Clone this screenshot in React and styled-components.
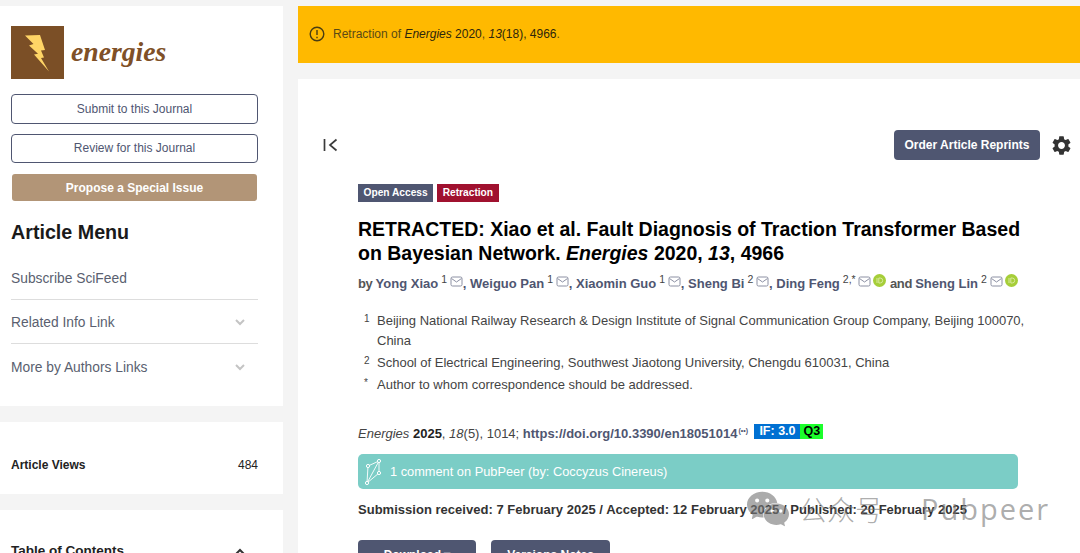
import React from "react";
import styled, { createGlobalStyle } from "styled-components";
import { MdSettings } from "react-icons/md";
import { SiWechat } from "react-icons/si";

const GlobalStyle = createGlobalStyle`
  html, body {
    margin: 0;
    padding: 0;
    height: 553px;
    overflow: hidden;
    background: #f4f4f4;
    font-family: "Liberation Sans", Arial, sans-serif;
    color: #222222;
  }
`;

const Page = styled.div`
  position: relative;
  display: flex;
  gap: 15px;
  height: 547px;
  padding-top: 6px;
  overflow: hidden;
`;

const Sidebar = styled.aside`
  flex: 0 0 283px;
  display: flex;
  flex-direction: column;
  gap: 16px;
`;

const SideCard = styled.section`
  flex: 0 0 auto;
  background: #ffffff;
  box-sizing: border-box;
  height: ${(p) => p.$height}px;
  padding: ${(p) => p.$padding};
`;

const LogoRow = styled.div`
  display: flex;
  align-items: center;
  gap: 7px;
  height: 53px;
  margin-bottom: 15px;
`;

const LogoWord = styled.span`
  font-family: "Liberation Serif", serif;
  font-style: italic;
  font-weight: 700;
  font-size: 27.7px;
  color: #7f5027;
  position: relative;
  top: -1px;
`;

const OutlineButton = styled.div`
  box-sizing: border-box;
  height: 29.5px;
  margin-bottom: 10px;
  border: 1px solid #4f5671;
  border-radius: 4px;
  display: flex;
  align-items: center;
  justify-content: center;
  font-size: 12px;
  color: #4f5671;
`;

const ProposeButton = styled.div`
  height: 27px;
  margin: 11px 1px 0;
  border-radius: 3px;
  background: #b29577;
  display: flex;
  align-items: center;
  justify-content: center;
  font-size: 12px;
  font-weight: 700;
  color: #ffffff;
`;

const MenuTitle = styled.h2`
  margin: 19px 0 12px;
  font-size: 19.7px;
  line-height: 24px;
  font-weight: 700;
  color: #1a1a1a;
`;

const MenuRow = styled.div`
  box-sizing: border-box;
  height: 44px;
  display: flex;
  align-items: center;
  justify-content: space-between;
  padding: 2px 13px 0 0;
  font-size: 13.8px;
  color: #5a5f70;
  border-bottom: ${(p) => (p.$last ? "none" : "1px solid #dddddd")};
`;

const StatRow = styled.div`
  display: flex;
  justify-content: space-between;
  align-items: center;
  font-size: 12px;
  line-height: 14px;
  color: #222222;
`;

const StatLabel = styled.strong`
  font-weight: 700;
`;

const TocRow = styled.div`
  display: flex;
  justify-content: space-between;
  align-items: center;
  padding-right: 13px;
  font-size: 13.5px;
  font-weight: 700;
  line-height: 16px;
  color: #222222;
`;

const Main = styled.main`
  flex: 1;
  display: flex;
  flex-direction: column;
  gap: 16px;
  min-width: 0;
`;

const Banner = styled.div`
  box-sizing: border-box;
  flex: 0 0 57px;
  background: #ffb900;
  display: flex;
  align-items: center;
  gap: 8px;
  padding: 0 0 2px 11px;
  font-size: 12px;
  color: #5a4a16;
`;

const BannerDark = styled.span`
  color: #2e260c;
  font-style: ${(p) => (p.$italic ? "italic" : "normal")};
`;

const ArticleCard = styled.article`
  flex: 1;
  background: #ffffff;
  padding-top: 51px;
  min-height: 0;
`;

const TopBar = styled.div`
  display: flex;
  align-items: center;
  justify-content: space-between;
  height: 30px;
  padding: 0 7px 0 25px;
`;

const TopActions = styled.div`
  display: flex;
  align-items: center;
  gap: 10px;
`;

const ReprintButton = styled.div`
  box-sizing: border-box;
  width: 146px;
  height: 30px;
  border-radius: 4px;
  background: #4f5671;
  color: #ffffff;
  font-size: 12px;
  font-weight: 700;
  display: flex;
  align-items: center;
  justify-content: center;
`;

const Content = styled.div`
  padding: 24px 50px 0 60px;
`;

const BadgeRow = styled.div`
  display: flex;
  gap: 4px;
  height: 18px;
`;

const Badge = styled.span`
  background: ${(p) => p.$bg};
  color: #ffffff;
  font-size: 10.2px;
  font-weight: 700;
  line-height: 18px;
  padding: 0 5.5px;
`;

const Title = styled.h1`
  margin: 15px 0 0;
  font-size: 19.5px;
  line-height: 24px;
  font-weight: 700;
  color: #000000;
`;

const Authors = styled.div`
  margin-top: 9px;
  font-size: 13px;
  line-height: 18px;
  font-weight: 700;
  color: #4f5671;
  white-space: nowrap;
`;

const Plain = styled.span`
  color: #555555;
  letter-spacing: -0.4px;
`;

const Sup = styled.sup`
  font-size: 10.5px;
  font-weight: 400;
  line-height: 0;
  margin: 0 2.75px 0 3px;
  color: #444444;
`;

const AffilList = styled.div`
  margin-top: 18px;
  display: flex;
  flex-direction: column;
  gap: 2px;
`;

const AffilRow = styled.div`
  display: grid;
  grid-template-columns: 19px 1fr;
  font-size: 13px;
  line-height: 20px;
  color: #444444;
`;

const AffilMark = styled.span`
  font-size: 10px;
  line-height: 16px;
  padding-left: 6px;
`;

const Citation = styled.div`
  margin-top: 29px;
  display: flex;
  align-items: center;
  height: 18px;
  font-size: 13px;
  color: #444444;
  white-space: nowrap;
`;

const CiteBold = styled.b`
  color: #222222;
`;

const DoiLink = styled.b`
  color: #4f5671;
`;

const Tiny = styled.span`
  width: 14px;
  font-size: 7px;
  font-weight: 700;
  color: #4f5671;
  margin: -6px 2px 0 1px;
`;

const ImpactBadge = styled.span`
  background: #0070d2;
  color: #ffffff;
  font-size: 12.5px;
  font-weight: 700;
  line-height: 15px;
  width: 46px;
  text-align: center;
  margin-top: -3px;
`;

const QuartileBadge = styled.span`
  background: #1cff2c;
  color: #000000;
  font-size: 12.5px;
  font-weight: 700;
  line-height: 15px;
  width: 23px;
  text-align: center;
  margin-top: -3px;
`;

const PubPeerBar = styled.div`
  margin-top: 12px;
  box-sizing: border-box;
  width: 660px;
  height: 35px;
  border-radius: 5px;
  background: #7bcdc6;
  color: #ffffff;
  display: flex;
  align-items: center;
  gap: 5px;
  padding-left: 7px;
  font-size: 12.8px;
`;

const Dates = styled.div`
  margin-top: 12px;
  font-size: 13px;
  letter-spacing: 0.02px;
  line-height: 18px;
  font-weight: 700;
  color: #333333;
  white-space: nowrap;
`;

const ButtonRow = styled.div`
  margin-top: 21px;
  display: flex;
  gap: 15px;
`;

const ActionButton = styled.div`
  width: ${(p) => p.$width}px;
  height: 30px;
  border-radius: 4px;
  background: #4f5671;
  color: #ffffff;
  font-size: 12px;
  font-weight: 700;
  display: flex;
  align-items: center;
  justify-content: center;
`;

const Watermark = styled.div`
  position: absolute;
  left: 747px;
  top: 488px;
  display: flex;
  align-items: center;
  color: rgba(120, 120, 120, 0.62);
  pointer-events: none;
`;

const WatermarkCjk = styled.span`
  margin-left: 10px;
  font-family: "Noto Sans CJK SC", sans-serif;
  font-size: 28px;
  line-height: 34px;
  font-weight: 300;
`;

const WatermarkName = styled.span`
  margin-left: 38px;
  font-family: "Open Sans", sans-serif;
  font-size: 29px;
  line-height: 34px;
  letter-spacing: 2px;
  font-weight: 400;
`;

const Chevron = ({ up }) => (
  <svg width="10" height="7" viewBox="0 0 10 7" fill="none" stroke={up ? "#333" : "#c4c4c4"} strokeWidth="2">
    <path d={up ? "M1 6l4-4 4 4" : "M1 1l4 4 4-4"} />
  </svg>
);

const Mail = () => (
  <svg width="13" height="11" viewBox="0 0 13 11" fill="none" stroke="#8c90a3" strokeWidth="1" style={{ verticalAlign: 1 }}>
    <rect x="1" y="1" width="11" height="9" rx="1.5" />
    <path d="M1.5 2.5l5 3.5 5-3.5" />
  </svg>
);

const Orcid = () => (
  <svg width="13" height="13" viewBox="0 0 13 13" style={{ verticalAlign: 1, marginLeft: 2 }}>
    <circle cx="6.5" cy="6.5" r="6.5" fill="#a6ce39" />
    <path d="M4 4v5" stroke="#d9ea9f" strokeWidth="1" />
    <path d="M5.8 4h1.4a2.5 2.5 0 010 5H5.8z" fill="none" stroke="#d9ea9f" strokeWidth="1" />
  </svg>
);

const authors = [
  ["Yong Xiao", "1"],
  ["Weiguo Pan", "1"],
  ["Xiaomin Guo", "1"],
  ["Sheng Bi", "2"],
];

const affiliations = [
  ["1", "Beijing National Railway Research & Design Institute of Signal Communication Group Company, Beijing 100070, China"],
  ["2", "School of Electrical Engineering, Southwest Jiaotong University, Chengdu 610031, China"],
  ["*", "Author to whom correspondence should be addressed."],
];

export default function App() {
  return (
    <Page>
      <GlobalStyle />
      <Sidebar>
        <SideCard $height={400} $padding="20px 25px 0 11px">
          <LogoRow>
            <svg width="53" height="53" viewBox="0 0 53 53">
              <rect width="53" height="53" fill="#7b4f26" />
              <path d="M14 9.5L29 9l5 15-4 .5 3 7-3 .5 8 13.5-15-17 4-.7-9-8.3 4.5-1.5z" fill="#ffd566" />
            </svg>
            <LogoWord>energies</LogoWord>
          </LogoRow>
          <OutlineButton>Submit to this Journal</OutlineButton>
          <OutlineButton>Review for this Journal</OutlineButton>
          <ProposeButton>Propose a Special Issue</ProposeButton>
          <MenuTitle>Article Menu</MenuTitle>
          <MenuRow>Subscribe SciFeed</MenuRow>
          <MenuRow>
            Related Info Link
            <Chevron />
          </MenuRow>
          <MenuRow $last>
            More by Authors Links
            <Chevron />
          </MenuRow>
        </SideCard>
        <SideCard $height={72} $padding="36px 25px 0 11px">
          <StatRow>
            <StatLabel>Article Views</StatLabel>
            484
          </StatRow>
        </SideCard>
        <SideCard $height={60} $padding="33px 25px 0 11px">
          <TocRow>
            Table of Contents
            <Chevron up />
          </TocRow>
        </SideCard>
      </Sidebar>
      <Main>
        <Banner>
          <svg width="16" height="16" viewBox="0 0 16 16" fill="none" stroke="#4a3d12" strokeWidth="1.4">
            <circle cx="8" cy="8" r="6.8" />
            <path d="M8 4v5M8 10.8v1.4" />
          </svg>
          <span>
            Retraction of <BannerDark $italic>Energies</BannerDark> <BannerDark>2020</BannerDark>,{" "}
            <BannerDark $italic>13</BannerDark>
            <BannerDark>(18), 4966</BannerDark>.
          </span>
        </Banner>
        <ArticleCard>
          <TopBar>
            <svg width="15" height="14" viewBox="0 0 15 14" fill="none" stroke="#3b3b3b" strokeWidth="1.7">
              <path d="M1.5 1v12M13.5 1.5L7 7l6.5 5.5" />
            </svg>
            <TopActions>
              <ReprintButton>Order Article Reprints</ReprintButton>
              <MdSettings size={23} color="#333333" />
            </TopActions>
          </TopBar>
          <Content>
            <BadgeRow>
              <Badge $bg="#4f5671">Open Access</Badge>
              <Badge $bg="#a0112f">Retraction</Badge>
            </BadgeRow>
            <Title>
              RETRACTED: Xiao et al. Fault Diagnosis of Traction Transformer Based on Bayesian Network. <i>Energies</i>{" "}
              2020, <i>13</i>, 4966
            </Title>
            <Authors>
              <Plain>by </Plain>
              {authors.map(([name, mark]) => (
                <React.Fragment key={name}>
                  {name}
                  <Sup>{mark}</Sup>
                  <Mail />,{" "}
                </React.Fragment>
              ))}
              Ding Feng
              <Sup>2,*</Sup>
              <Mail />
              <Orcid /> <Plain>and </Plain>
              Sheng Lin
              <Sup>2</Sup>
              <Mail />
              <Orcid />
            </Authors>
            <AffilList>
              {affiliations.map(([mark, text]) => (
                <AffilRow key={mark}>
                  <AffilMark>{mark}</AffilMark>
                  <span>{text}</span>
                </AffilRow>
              ))}
            </AffilList>
            <Citation>
              <span>
                <i>Energies</i> <CiteBold>2025</CiteBold>, <i>18</i>(5), 1014;{" "}
                <DoiLink>https://doi.org/10.3390/en18051014</DoiLink>
              </span>
              <Tiny>(••)</Tiny>
              <ImpactBadge>IF: 3.0</ImpactBadge>
              <QuartileBadge>Q3</QuartileBadge>
            </Citation>
            <PubPeerBar>
              <svg width="20" height="26" viewBox="0 0 20 26" fill="none" stroke="#ffffff" strokeWidth="1">
                <path d="M3 7L14 2 14 14 2 24zM2 24L14 2" opacity="0.9" />
                <circle cx="3" cy="7" r="1.6" fill="#7bcdc6" />
                <circle cx="14" cy="2" r="1.6" fill="#7bcdc6" />
                <circle cx="14" cy="14" r="1.6" fill="#7bcdc6" />
                <circle cx="2" cy="24" r="1.6" fill="#7bcdc6" />
              </svg>
              1 comment on PubPeer (by: Coccyzus Cinereus)
            </PubPeerBar>
            <Dates>Submission received: 7 February 2025 / Accepted: 12 February 2025 / Published: 20 February 2025</Dates>
            <ButtonRow>
              <ActionButton $width={118}>Download ▾</ActionButton>
              <ActionButton $width={119}>Versions Notes</ActionButton>
            </ButtonRow>
          </Content>
        </ArticleCard>
      </Main>
      <Watermark>
        <SiWechat size={42} />
        <WatermarkCjk>公众号</WatermarkCjk>
        <WatermarkName>Pubpeer</WatermarkName>
      </Watermark>
    </Page>
  );
}
